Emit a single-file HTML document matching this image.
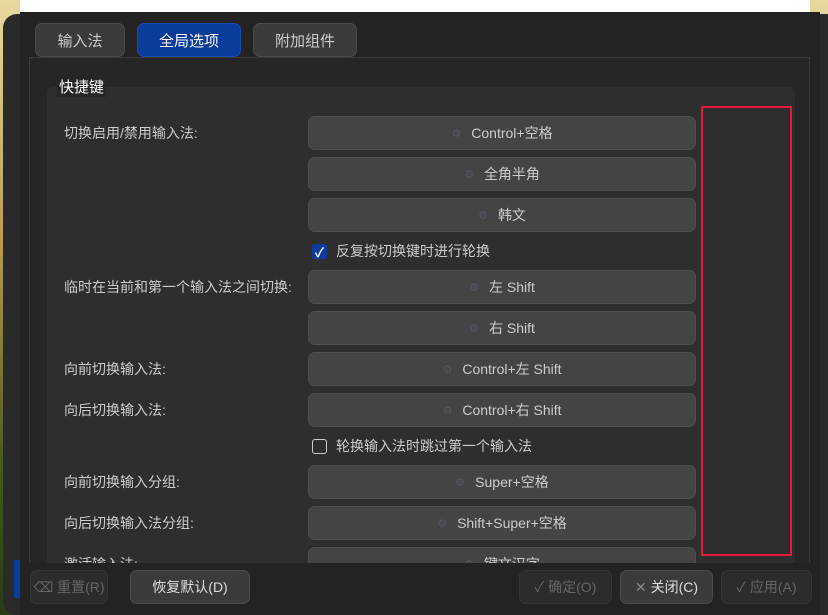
<!DOCTYPE html>
<html><head><meta charset="utf-8"><style>
*{box-sizing:border-box;margin:0;padding:0}
body{width:828px;height:615px;overflow:hidden;background:linear-gradient(180deg,#e8d9a0 0%,#b89a50 40%,#4a5a20 75%,#2a3a15 100%);font-family:"Liberation Sans","Noto Sans CJK SC",sans-serif;position:relative;color:#ddd}
.abs{position:absolute}
.frame{left:3px;top:14px;width:825px;height:601px;background:#2a2a2a;border-radius:14px 0 0 14px}
.win{left:20px;top:12px;width:800px;height:603px;background:#232323}
.white{left:20px;top:0;width:790px;height:12px;background:#fff}
.tab{top:23px;height:34px;background:#3b3b3b;border:1px solid #4a4a4a;border-radius:7px;font-size:15px;color:#ccc;display:flex;align-items:center;justify-content:center}
.tab.on{background:#0a3c9c;border-color:#1a4cb0;color:#fff}
.panel{left:29px;top:57px;width:781px;height:506px;background:#262626;border:1px solid #3a3a3a;border-bottom:none;overflow:hidden}
.group{left:17px;top:29px;width:748px;height:520px;background:#2e2e2e;border-radius:6px}
.gt{left:27px;top:18px;font-size:15px;color:#fff;background:#262626;padding:0 2px}
.lbl{left:34px;font-size:14px;color:#ccc;height:34px;line-height:34px}
.btn{left:278px;width:388px;height:34px;background:#444;border:1px solid #4e4e4e;border-radius:7px;font-size:14px;color:#ccc;display:flex;align-items:center;justify-content:center}
.btn i{font-style:normal;color:#556;font-size:11px;margin-right:10px}
.cb{left:282px;font-size:14px;color:#ccc;display:flex;align-items:center;height:20px}
.box{width:15px;height:15px;border:1.5px solid #ccc;border-radius:3px;margin-right:9px;display:flex;align-items:center;justify-content:center}
.box.on{background:#0a3c9c;border-color:#0a3c9c;color:#fff;font-size:13px;font-weight:bold}
.red{left:701px;top:106px;width:91px;height:450px;border:2px solid #e8193c}
.bb{top:570px;height:34px;background:#3b3b3b;border:1px solid #4c4c4c;border-radius:7px;font-size:14px;color:#ddd;display:flex;align-items:center;justify-content:center}
.bb.dis{background:#2c2c2c;border-color:#363636;color:#666}
</style></head><body>
<div class="abs frame"></div>
<div class="abs win"></div>
<div class="abs white"></div>
<div class="abs" style="left:14px;top:560px;width:6px;height:38px;background:#0a3c9c"></div>
<div class="abs tab" style="left:35px;width:90px">输入法</div>
<div class="abs tab on" style="left:137px;width:104px">全局选项</div>
<div class="abs tab" style="left:253px;width:104px">附加组件</div>
<div class="abs panel">
 <div class="abs group"></div>
 <div class="abs gt">快捷键</div>
 <div class="abs lbl" style="top:58px">切换启用/禁用输入法:</div>
 <div class="abs btn" style="top:58px"><i>⚙</i>Control+空格</div>
 <div class="abs btn" style="top:99px"><i>⚙</i>全角半角</div>
 <div class="abs btn" style="top:140px"><i>⚙</i>韩文</div>
 <div class="abs cb" style="top:183px"><span class="box on">✓</span>反复按切换键时进行轮换</div>
 <div class="abs lbl" style="top:212px">临时在当前和第一个输入法之间切换:</div>
 <div class="abs btn" style="top:212px"><i>⚙</i>左 Shift</div>
 <div class="abs btn" style="top:253px"><i>⚙</i>右 Shift</div>
 <div class="abs lbl" style="top:294px">向前切换输入法:</div>
 <div class="abs btn" style="top:294px"><i>⚙</i>Control+左 Shift</div>
 <div class="abs lbl" style="top:335px">向后切换输入法:</div>
 <div class="abs btn" style="top:335px"><i>⚙</i>Control+右 Shift</div>
 <div class="abs cb" style="top:378px"><span class="box"></span>轮换输入法时跳过第一个输入法</div>
 <div class="abs lbl" style="top:407px">向前切换输入分组:</div>
 <div class="abs btn" style="top:407px"><i>⚙</i>Super+空格</div>
 <div class="abs lbl" style="top:448px">向后切换输入法分组:</div>
 <div class="abs btn" style="top:448px"><i>⚙</i>Shift+Super+空格</div>
 <div class="abs lbl" style="top:489px">激活输入法:</div>
 <div class="abs btn" style="top:489px"><i>⚙</i>键文汉字</div>
</div>
<div class="abs red"></div>
<div class="abs bb dis" style="left:30px;width:78px">⌫ 重置(R)</div>
<div class="abs bb" style="left:130px;width:120px">恢复默认(D)</div>
<div class="abs bb dis" style="left:519px;width:93px">✓ 确定(O)</div>
<div class="abs bb" style="left:620px;width:93px"><span style="color:#888;margin-right:4px">✕</span>关闭(C)</div>
<div class="abs bb dis" style="left:721px;width:91px">✓ 应用(A)</div>
</body></html>
